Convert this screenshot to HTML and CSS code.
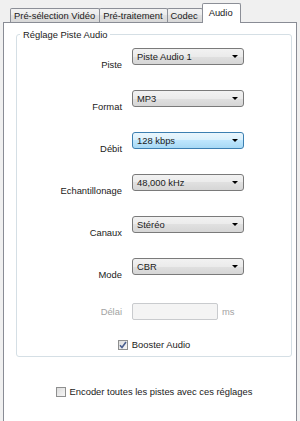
FILE: index.html
```html
<!DOCTYPE html>
<html lang="fr">
<head>
    <meta charset="UTF-8">
    <meta name="viewport" content="width=device-width, initial-scale=1.0">
    <title>Audio</title>
    <link rel="stylesheet" href="styles.css">
</head>
<body>
    <div class="window">
        <!-- Onglets -->
        <div class="tabs">
            <div class="tab">Pré-sélection Vidéo</div>
            <div class="tab">Pré-traitement</div>
            <div class="tab">Codec</div>
            <div class="tab active">Audio</div>
        </div>

        <div class="panel">
            <div class="group">
                <div class="group-title">Réglage Piste Audio</div>
                <div class="fields">
                    <div class="field">
                        <span class="label">Piste</span>
                        <div class="combo"><span>Piste Audio 1</span><i class="arrow"></i></div>
                    </div>
                    <div class="field">
                        <span class="label">Format</span>
                        <div class="combo"><span>MP3</span><i class="arrow"></i></div>
                    </div>
                    <div class="field">
                        <span class="label">Débit</span>
                        <div class="combo hover"><span>128 kbps</span><i class="arrow"></i></div>
                    </div>
                    <div class="field">
                        <span class="label">Echantillonage</span>
                        <div class="combo"><span>48,000 kHz</span><i class="arrow"></i></div>
                    </div>
                    <div class="field">
                        <span class="label">Canaux</span>
                        <div class="combo"><span>Stéréo</span><i class="arrow"></i></div>
                    </div>
                    <div class="field">
                        <span class="label">Mode</span>
                        <div class="combo"><span>CBR</span><i class="arrow"></i></div>
                    </div>
                    <div class="field delay">
                        <span class="label disabled">Délai</span>
                        <div class="textbox"></div>
                        <span class="unit disabled">ms</span>
                    </div>
                </div>
                <div class="check booster">
                    <span class="box">
                        <svg width="8" height="8" viewBox="0 0 8 8"><path d="M1 4.2 L3 6.5 L7 1" fill="none" stroke="#4a5f8f" stroke-width="1.6"/></svg>
                    </span>
                    Booster Audio
                </div>
            </div>

            <div class="check all">
                <span class="box"></span>
                Encoder toutes les pistes avec ces réglages
            </div>
        </div>
    </div>
</body>
</html>
```

FILE: styles.css
```css
html, body {
    margin: 0;
    padding: 0;
    height: 421px;
    overflow: hidden;
}
body {
    font-family: "Liberation Sans", Arial, sans-serif;
    font-size: 9.4px;
    line-height: 13px;
    color: #1a1a1a;
    background-color: #f0f0f0;
}
.window {
    padding: 0 3px;
}

/* onglets */
.tabs {
    display: flex;
    align-items: flex-end;
    height: 22px;
    padding-left: 7px;
}
.tab {
    height: 13px;
    line-height: 13px;
    padding: 0 4px 0 3px;
    margin-right: -1px;
    border: 1px solid #8c8f97;
    border-bottom: none;
    border-radius: 2px 2px 0 0;
    background: linear-gradient(#f3f3f3, #ebebeb 50%, #e1e1e1 50%, #d8d8d8);
    white-space: nowrap;
}
.tab.active {
    position: relative;
    z-index: 1;
    height: 19px;
    margin-bottom: -1px;
    padding: 0 7px 0 6px;
    line-height: 17px;
    background: #fff;
}

.panel {
    height: 410px;
    border: 1px solid #898c95;
    background-color: #fff;
    padding: 0 4px 0 12px;
}

/* groupe */
.group {
    margin-top: 11px;
    border: 1px solid #d5dfe5;
    border-radius: 3px;
    padding-bottom: 5px;
}
.group-title {
    width: max-content;
    margin: -7px 0 0 3px;
    padding: 0 3px;
    background: #fff;
}
.fields {
    padding-top: 7px;
}
.field {
    display: grid;
    grid-template-columns: 105px 112px;
    column-gap: 10px;
    align-items: start;
    height: 42px;
}
.label {
    text-align: right;
    margin-top: 10px;
}
.disabled {
    color: #a3a3a3;
}

.combo {
    display: flex;
    align-items: center;
    justify-content: space-between;
    height: 15px;
    padding: 0 5px 0 4px;
    border: 1px solid #7a7a7a;
    border-radius: 3px;
    background: linear-gradient(#f2f2f2, #ebebeb 50%, #e0e0e0 50%, #d6d6d6);
}
.combo.hover {
    border-color: #3c7fb1;
    background: linear-gradient(#eaf6fd, #d9f0fc 50%, #bee6fd 50%, #a7d9f5);
}
.arrow {
    width: 0;
    height: 0;
    border-left: 3px solid transparent;
    border-right: 3px solid transparent;
    border-top: 3px solid #000;
}

.field.delay {
    grid-template-columns: 105px 86px auto;
    align-items: center;
    height: 17px;
    margin-top: 3px;
}
.field.delay .label {
    margin-top: 0;
}
.textbox {
    height: 15px;
    border: 1px solid #c9cbce;
    border-radius: 2px;
    background-color: #f4f4f4;
}
.unit {
    margin-left: -6px;
}

/* cases a cocher */
.check {
    display: flex;
    align-items: center;
    justify-content: center;
    gap: 4px;
}
.booster {
    margin-top: 18px;
}
.all {
    margin-top: 28px;
}
.box {
    display: flex;
    align-items: center;
    justify-content: center;
    width: 8px;
    height: 8px;
    border: 1px solid #8e8f8f;
    background: linear-gradient(135deg, #dcdcdc, #f6f6f6);
}
```
